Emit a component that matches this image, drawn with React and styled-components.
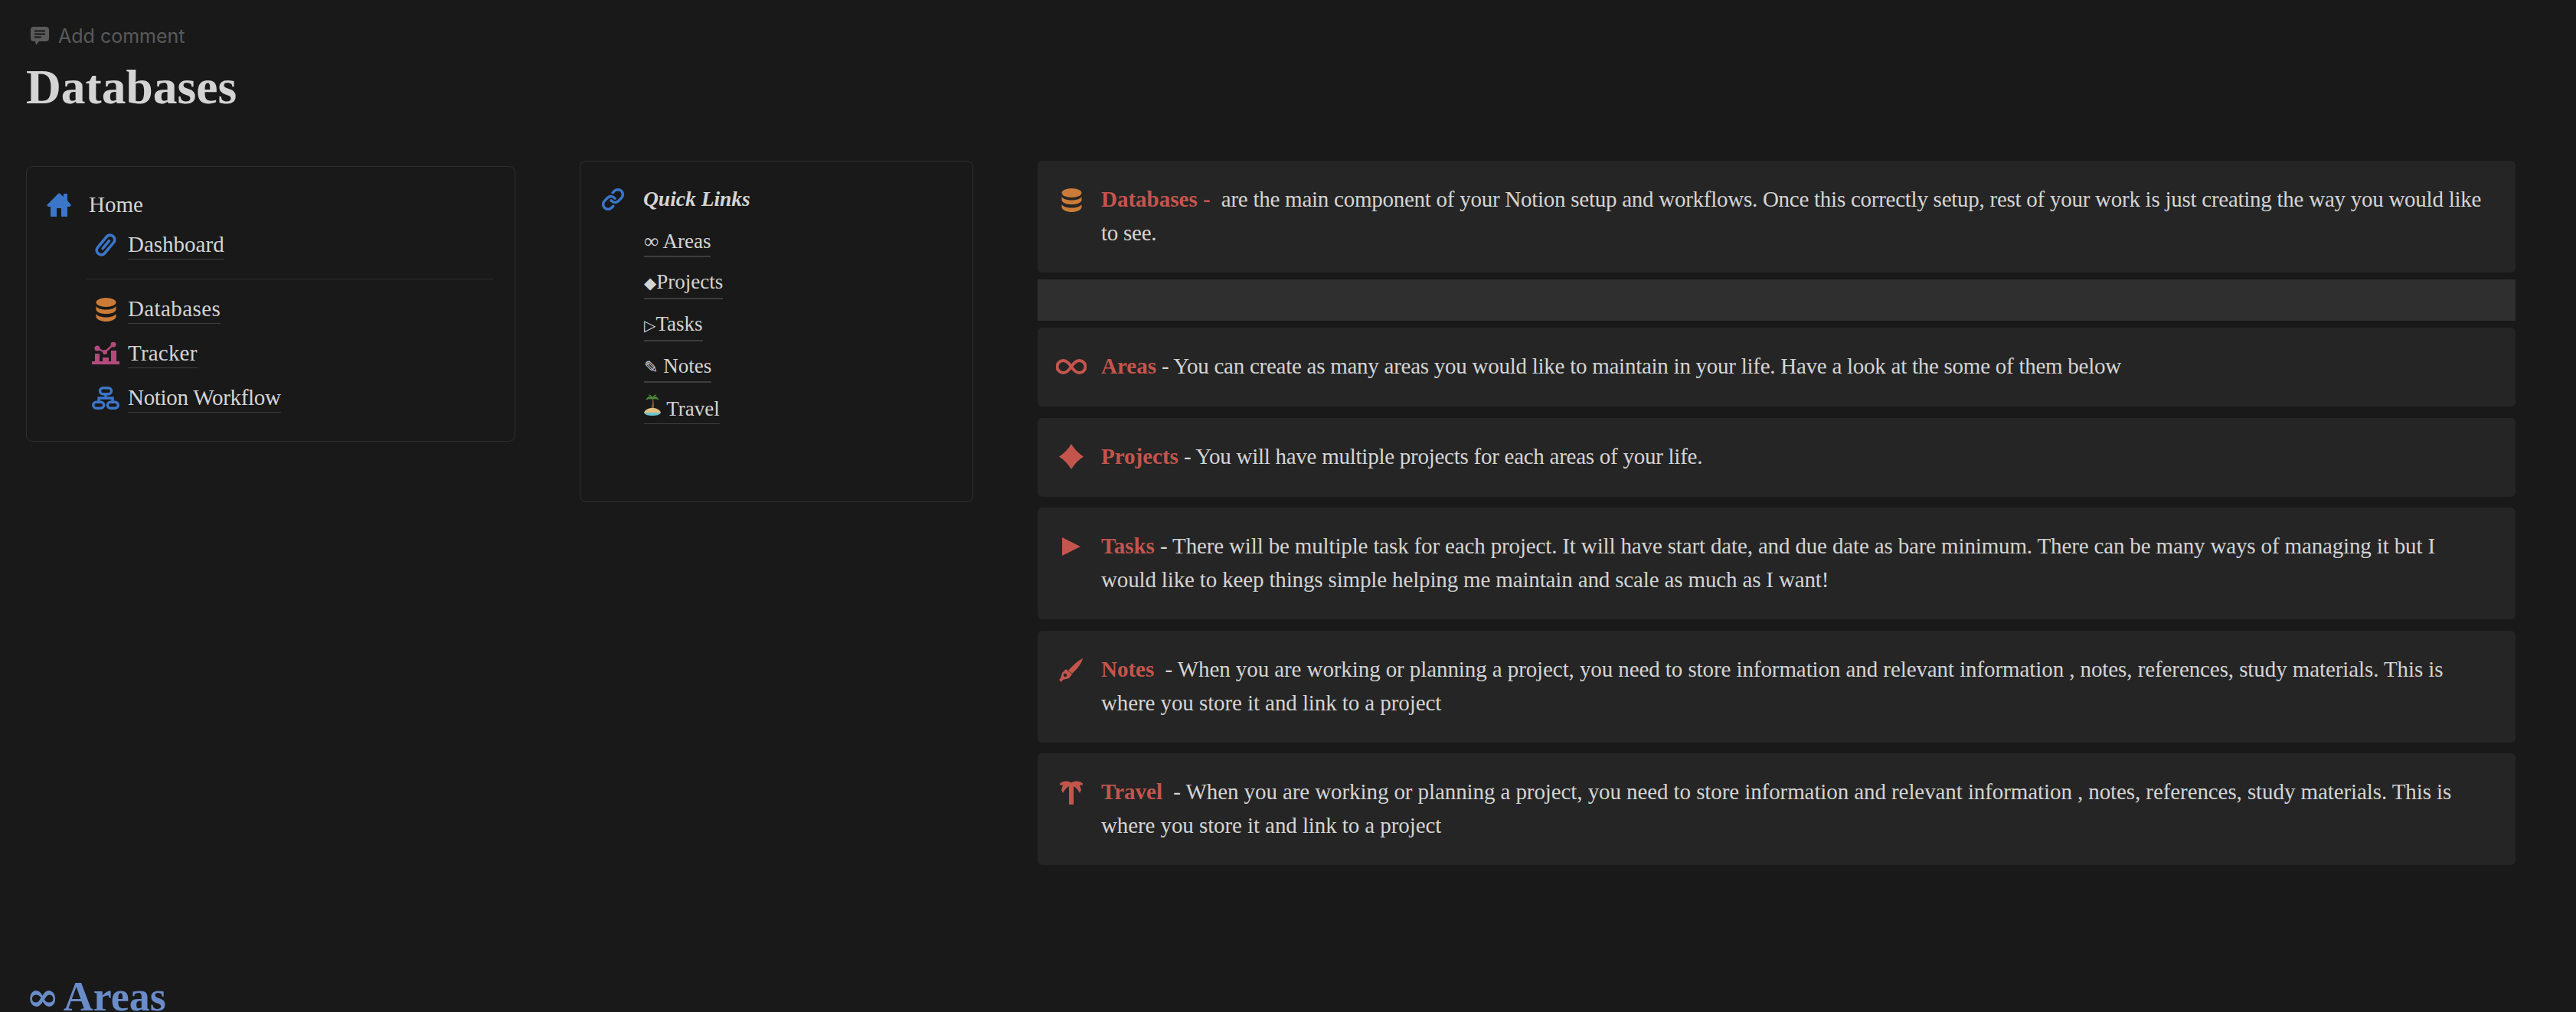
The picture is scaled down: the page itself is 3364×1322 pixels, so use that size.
import React from "react";
import styled, { createGlobalStyle } from "styled-components";

const SERIF = `"Liberation Serif", "DejaVu Serif", serif`;
const RED = "#c4554d";
const BLUE = "#3b76c9";
const ORANGE = "#cb7b37";
const PINK = "#b24b7c";

const Global = createGlobalStyle`
  html, body { margin: 0; padding: 0; background: #191919; }
  body { font-family: ${SERIF}; color: #d4d4d4; }
  * { box-sizing: border-box; }
`;

const Page = styled.main`
  height: 1322px;
  overflow: hidden;
  padding: 33px 79px 0 34px;
  background: #191919;
`;
const CommentRow = styled.div`
  display: flex;
  align-items: center;
  gap: 12px;
  height: 28px;
  padding-left: 6px;
  font: 25px "Inter", "Liberation Sans", sans-serif;
  color: #5a5a5a;
`;
const Title = styled.h1`
  margin: 15px 0 0;
  font: 700 63.5px/76px ${SERIF};
  color: #d4d4d4;
`;
const Columns = styled.div`
  display: grid;
  grid-template-columns: 639px 514px 1fr;
  column-gap: 84px;
  align-items: start;
  margin-top: 58px;
`;
const OutlineCard = styled.section`
  border: 1px solid #2e2e2e;
  border-radius: 8px;
  margin-top: ${(p) => p.$top || 0}px;
  min-height: ${(p) => p.$h}px;
  padding: 27px 28px 27px ${(p) => p.$left || 26}px;
`;
const HeadRow = styled.div`
  display: flex;
  align-items: center;
  gap: ${(p) => p.$gap}px;
  height: 44px;
  font-size: 29px;
`;
const SubList = styled.div`
  margin: 2px 0 0 52px;
  padding-left: 3px;
`;
const Divider = styled.hr`
  border: 0;
  border-top: 1px solid #2f2f2f;
  margin: 15px 0 10px -3px;
`;
const SubItem = styled.div`
  display: flex;
  align-items: center;
  height: 58px;
  font-size: 29px;
`;
const IconSlot = styled.span`
  display: flex;
  justify-content: center;
  width: 44px;
  margin-right: 7px;
  flex: none;
`;
const LinkText = styled.span`
  display: inline-block;
  line-height: 37px;
  letter-spacing: ${(p) => p.$ls || 0}px;
  border-bottom: ${(p) => p.$thick || 1}px solid #3d3d3d;
`;
const QuickTitle = styled.span`
  font: italic 700 27.5px ${SERIF};
`;
const QuickList = styled.div`
  margin: 7px 0 0 56px;
`;
const QuickItem = styled.div`
  display: flex;
  align-items: center;
  height: 54.5px;
  font-size: 27px;
`;
const Glyph = styled.span`
  font-family: "DejaVu Sans", sans-serif;
  font-size: ${(p) => p.$size || 22}px;
`;
const CalloutStack = styled.div`
  display: flex;
  flex-direction: column;
`;
const Callout = styled.div`
  display: flex;
  background: #252525;
  border-radius: 6px;
  margin-top: ${(p) => p.$gap || 0}px;
  padding: 29px 30px 30px 18px;
  font-size: 29px;
  line-height: 43.5px;
  letter-spacing: ${(p) => p.$ls ?? -0.26}px;
`;
const CalloutIcon = styled.span`
  display: flex;
  align-items: center;
  justify-content: center;
  flex: none;
  width: 52px;
  height: 44px;
  margin-right: 13px;
`;
const Spacer = styled.div`
  height: 54px;
  margin-top: 9px;
  background: #2f2f2f;
`;
const Strong = styled.strong`
  color: ${RED};
  font-weight: 700;
  letter-spacing: 0;
`;
const AreasHeading = styled.h2`
  margin: 137px 0 0;
  font: 700 54px/70px ${SERIF};
  word-spacing: -5px;
  color: #6a8cc9;
`;
const HeadingGlyph = styled.span`
  font-family: "DejaVu Serif", serif;
  font-size: 52px;
  line-height: 0;
`;

const HomeIcon = () => (
  <svg width="32" height="31" viewBox="0 0 32 31"><path fill={BLUE} d="M16 0l6 5V1h5v9l5 6-2 2h-3v13h-8V20h-6v11H5V18H2l-2-2z" /></svg>
);
const ClipIcon = () => (
  <svg width="30" height="32" viewBox="0 0 30 32"><g transform="rotate(40 15 16)" fill="none" stroke={BLUE} strokeWidth="3.600" strokeLinecap="round"><rect x="9" y="1" width="12" height="30" rx="6" /><path d="M15 9v13" /></g></svg>
);
const DbIcon = ({ w = 27, h = 31 }) => (
  <svg width={w} height={h} viewBox="0 0 27 31" fill={ORANGE}>
    <ellipse cx="13.500" cy="6" rx="13" ry="6" />
    <path d="M.5 11c2 3 7 4.500 13 4.500s11-1.500 13-4.500v5c-1 3-6.500 5-13 5S1.500 19 .5 16z" />
    <path d="M.5 21c2 3 7 4.500 13 4.500s11-1.500 13-4.500v4c-1 3.500-6.500 6-13 6S1.500 28.500.5 25z" />
  </svg>
);
const TrackerIcon = () => (
  <svg width="36" height="30" viewBox="0 0 36 30" fill={PINK}>
    <rect x="0" y="25" width="36" height="4" />
    <rect x="4" y="15" width="6" height="10" />
    <rect x="14" y="20" width="8" height="5" />
    <rect x="25" y="11" width="7" height="14" />
    <path d="M7 8l10 5 11-10" fill="none" stroke={PINK} strokeWidth="2.500" />
    <circle cx="7" cy="8" r="3.500" /><circle cx="17" cy="13" r="3" /><circle cx="28" cy="3" r="3.500" />
  </svg>
);
const FlowIcon = () => (
  <svg width="36" height="30" viewBox="0 0 36 30" fill="none" stroke={BLUE} strokeWidth="3.400">
    <rect x="10.500" y="1.700" width="15" height="8" rx="4" />
    <path d="M18 10v5M9 20v-5h18v5" />
    <rect x="1.700" y="20.300" width="14" height="8" rx="4" />
    <rect x="20.300" y="20.300" width="14" height="8" rx="4" />
  </svg>
);
const ChainIcon = () => (
  <svg width="31" height="31" viewBox="0 0 24 24" fill="none" stroke={BLUE} strokeWidth="2.700" strokeLinecap="round" strokeLinejoin="round">
    <path d="M10 13a5 5 0 0 0 7.540.540l3-3a5 5 0 0 0-7.070-7.070l-1.720 1.710" />
    <path d="M14 11a5 5 0 0 0-7.540-.540l-3 3a5 5 0 0 0 7.070 7.070l1.710-1.710" />
  </svg>
);
const CommentIcon = () => (
  <svg width="24" height="24" viewBox="0 0 24 24">
    <path fill="#5a5a5a" d="M4 0h16a4 4 0 0 1 4 4v11a4 4 0 0 1-4 4H11l-4 5-1-5H4a4 4 0 0 1-4-4V4a4 4 0 0 1 4-4z" />
    <path stroke="#191919" strokeWidth="1.800" d="M5 5.500h14M5 9.500h14M5 13.500h9" />
  </svg>
);
const InfinityIcon = () => (
  <svg width="40" height="20" viewBox="0 0 40 20" fill="none" stroke={RED} strokeWidth="4">
    <path d="M20 10C16 4 13 2 9.500 2a8 8 0 0 0 0 16c3.500 0 6.500-2 10.500-8s7-8 10.500-8a8 8 0 0 1 0 16c-3.500 0-6.500-2-10.500-8z" />
  </svg>
);
const DiamondIcon = () => (
  <svg width="32" height="33" viewBox="0 0 32 33"><path fill={RED} d="M16 0Q22 10 32 16.500Q22 23 16 33Q10 23 0 16.500Q10 10 16 0z" /></svg>
);
const PlayIcon = () => (
  <svg width="24" height="24" viewBox="0 0 24 24"><path fill={RED} d="M0 0l24 12L0 24z" /></svg>
);
const PenIcon = () => (
  <svg width="32" height="31" viewBox="0 0 32 31">
    <path fill={RED} d="M31 0c-1 5-6 13-14 20l-5-4C18 9 25 3 31 0z" />
    <path fill={RED} d="M9 14l8 7-4 5-8 2-2 3-3-3 2-2 2-7z" />
    <circle cx="8" cy="22" r="2.200" fill="#252525" />
  </svg>
);
const PalmIcon = () => (
  <svg width="30" height="31" viewBox="0 0 30 31"><path fill={RED} d="M0 3.500C4 0 10-.5 15 2.500c5-3 11-2.500 15 1V5.500h-4l2 6.500-2 4c-2-4-4.500-7-8-9V31h-6V7c-3.500 2-6 5-8 9l-2-4 2-6.500H0z" /></svg>
);
const IslandEmoji = () => (
  <svg width="23" height="28" viewBox="0 0 23 28">
    <path d="M11 6c0 6-1 10-2 14h4c0-5 0-10-1-14z" fill="#7a5a3a" />
    <path d="M11 6C8 2 5 3 3 7c3-2 5-1 8-1zM11 6c3-4 6-3 8 1-3-2-5-1-8-1zM11 5C10 2 8 1 6 1M11 5c1-3 3-4 5-4" fill="#4d8a3c" stroke="#4d8a3c" />
    <path d="M0 24c2-5 7-6 11-6s9 1 11 6z" fill="#e3c084" />
    <path d="M0 24h22c-1 3-6 4-11 4S1 27 0 24z" fill="#6fc4cc" />
  </svg>
);

export default function App() {
  return (
    <Page>
      <Global />
      <CommentRow><CommentIcon />Add comment</CommentRow>
      <Title>Databases</Title>
      <Columns>
        <OutlineCard $top={7} $h={360}>
          <HeadRow $gap={23}><HomeIcon />Home</HeadRow>
          <SubList>
            <SubItem><IconSlot><ClipIcon /></IconSlot><LinkText>Dashboard</LinkText></SubItem>
            <Divider />
            <SubItem><IconSlot><DbIcon /></IconSlot><LinkText $ls={0.4}>Databases</LinkText></SubItem>
            <SubItem><IconSlot><TrackerIcon /></IconSlot><LinkText $ls={0.2}>Tracker</LinkText></SubItem>
            <SubItem><IconSlot><FlowIcon /></IconSlot><LinkText $ls={-0.3}>Notion Workflow</LinkText></SubItem>
          </SubList>
        </OutlineCard>
        <OutlineCard $h={446} $left={27}>
          <HeadRow $gap={24}><ChainIcon /><QuickTitle>Quick Links</QuickTitle></HeadRow>
          <QuickList>
            <QuickItem><LinkText $thick={2}>∞ Areas</LinkText></QuickItem>
            <QuickItem><LinkText $thick={2}><Glyph $size={21}>◆</Glyph>Projects</LinkText></QuickItem>
            <QuickItem><LinkText $thick={2}><Glyph $size={20}>▷</Glyph>Tasks</LinkText></QuickItem>
            <QuickItem><LinkText $thick={2}><Glyph>✎</Glyph> Notes</LinkText></QuickItem>
            <QuickItem><LinkText><IslandEmoji /> Travel</LinkText></QuickItem>
          </QuickList>
        </OutlineCard>
        <CalloutStack>
          <Callout>
            <CalloutIcon><DbIcon /></CalloutIcon>
            <div><Strong>Databases - </Strong>{"\u00a0"}are the main component of your Notion setup and workflows. Once this correctly setup, rest of your work is just creating the way you would like to see.</div>
          </Callout>
          <Spacer />
          <Callout $gap={9}>
            <CalloutIcon><InfinityIcon /></CalloutIcon>
            <div><Strong>Areas</Strong> - You can create as many areas you would like to maintain in your life. Have a look at the some of them below</div>
          </Callout>
          <Callout $gap={14.5}>
            <CalloutIcon><DiamondIcon /></CalloutIcon>
            <div><Strong>Projects</Strong> - You will have multiple projects for each areas of your life.</div>
          </Callout>
          <Callout $gap={14.5} $ls={-0.15}>
            <CalloutIcon><PlayIcon /></CalloutIcon>
            <div><Strong>Tasks</Strong> - There will be multiple task for each project. It will have start date, and due date as bare minimum. There can be many ways of managing it but I<br />would like to keep things simple helping me maintain and scale as much as I want!</div>
          </Callout>
          <Callout $gap={15} $ls={-0.09}>
            <CalloutIcon><PenIcon /></CalloutIcon>
            <div><Strong>Notes</Strong>{"\u00a0"} - When you are working or planning a project, you need to store information and relevant information , notes, references, study materials. This is<br />where you store it and link to a project</div>
          </Callout>
          <Callout $gap={14} $ls={-0.09}>
            <CalloutIcon><PalmIcon /></CalloutIcon>
            <div><Strong>Travel</Strong>{"\u00a0"} - When you are working or planning a project, you need to store information and relevant information , notes, references, study materials. This is<br />where you store it and link to a project</div>
          </Callout>
        </CalloutStack>
      </Columns>
      <AreasHeading><HeadingGlyph>∞</HeadingGlyph> Areas</AreasHeading>
    </Page>
  );
}
